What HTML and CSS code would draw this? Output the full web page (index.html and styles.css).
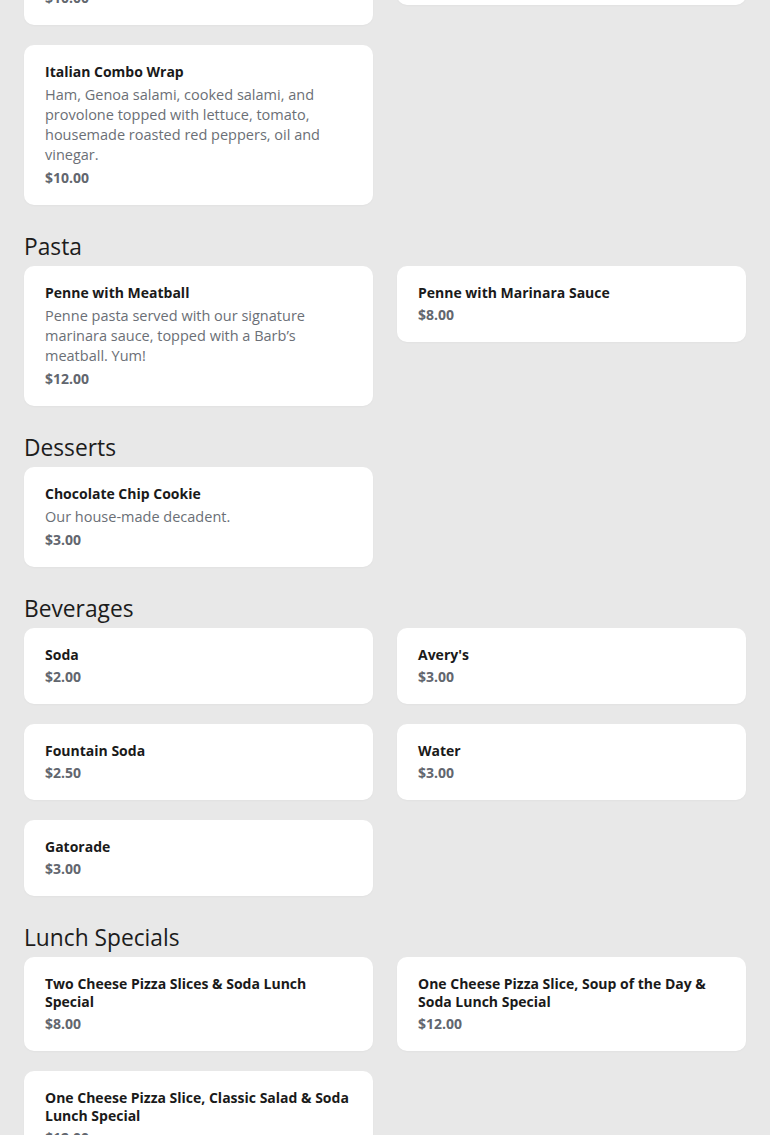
FILE: index.html
```html
<!DOCTYPE html>
<html lang="en">
<head>
    <meta charset="UTF-8">
    <meta name="viewport" content="width=device-width, initial-scale=1.0">
    <title>Menu</title>
    <link rel="stylesheet" href="styles.css">
</head>
<body>

    <main class="menu">

        <!-- Wraps (scrolled past) -->
        <section class="section section-first">
            <div class="items">
                <div class="item">
                    <p class="item-name">Turkey Club Wrap</p>
                    <p class="item-desc">Turkey, bacon, provolone, lettuce, tomato and mayo wrapped in a warm flour tortilla with a side of chips.</p>
                    <p class="item-price">$10.00</p>
                </div>
                <div class="item">
                    <p class="item-name">Chicken Caesar Wrap</p>
                    <p class="item-desc">Grilled chicken, romaine, parmesan and creamy Caesar dressing.</p>
                    <p class="item-price">$10.00</p>
                </div>
                <div class="item">
                    <p class="item-name">Italian Combo Wrap</p>
                    <p class="item-desc">Ham, Genoa salami, cooked salami, and provolone topped with lettuce, tomato, housemade roasted red peppers, oil and vinegar.</p>
                    <p class="item-price">$10.00</p>
                </div>
            </div>
        </section>

        <section class="section">
            <h2 class="section-title">Pasta</h2>
            <div class="items">
                <div class="item">
                    <p class="item-name">Penne with Meatball</p>
                    <p class="item-desc">Penne pasta served with our signature marinara sauce, topped with a Barb’s meatball. Yum!</p>
                    <p class="item-price">$12.00</p>
                </div>
                <div class="item">
                    <p class="item-name">Penne with Marinara Sauce</p>
                    <p class="item-price">$8.00</p>
                </div>
            </div>
        </section>

        <section class="section">
            <h2 class="section-title">Desserts</h2>
            <div class="items">
                <div class="item">
                    <p class="item-name">Chocolate Chip Cookie</p>
                    <p class="item-desc">Our house-made decadent.</p>
                    <p class="item-price">$3.00</p>
                </div>
            </div>
        </section>

        <section class="section">
            <h2 class="section-title">Beverages</h2>
            <div class="items">
                <div class="item">
                    <p class="item-name">Soda</p>
                    <p class="item-price">$2.00</p>
                </div>
                <div class="item">
                    <p class="item-name">Avery's</p>
                    <p class="item-price">$3.00</p>
                </div>
                <div class="item">
                    <p class="item-name">Fountain Soda</p>
                    <p class="item-price">$2.50</p>
                </div>
                <div class="item">
                    <p class="item-name">Water</p>
                    <p class="item-price">$3.00</p>
                </div>
                <div class="item">
                    <p class="item-name">Gatorade</p>
                    <p class="item-price">$3.00</p>
                </div>
            </div>
        </section>

        <section class="section">
            <h2 class="section-title">Lunch Specials</h2>
            <div class="items">
                <div class="item">
                    <p class="item-name">Two Cheese Pizza Slices &amp; Soda Lunch Special</p>
                    <p class="item-price">$8.00</p>
                </div>
                <div class="item">
                    <p class="item-name">One Cheese Pizza Slice, Soup of the Day &amp; Soda Lunch Special</p>
                    <p class="item-price">$12.00</p>
                </div>
                <div class="item">
                    <p class="item-name">One Cheese Pizza Slice, Classic Salad &amp; Soda Lunch Special</p>
                    <p class="item-price">$12.00</p>
                </div>
            </div>
        </section>

    </main>

</body>
</html>
```

FILE: styles.css
```css
body {
    font-family: 'Open Sans', 'Liberation Sans', sans-serif;
    background-color: #e8e8e8;
    margin: 0;
    color: #1a1a1a;
}

.menu {
    padding: 0 24px 40px;
}

.section {
    margin-top: 26px;
}

/* page is scrolled, first cards sit above the fold */
.section-first {
    margin-top: -115px;
}

.section-title {
    font-size: 22.75px;
    font-weight: 400;
    line-height: 32px;
    color: #1c1c1c;
    margin: 0 0 3px;
}

.items {
    display: grid;
    grid-template-columns: 1fr 1fr;
    column-gap: 24px;
    row-gap: 20px;
    align-items: start;
}

.item {
    background-color: #fff;
    border-radius: 10px;
    padding: 18px 21px 17px;
    box-shadow: 0 1px 2px rgba(0, 0, 0, 0.03);
}

.item p {
    margin: 0;
}

.item-name {
    font-size: 14px;
    font-weight: 700;
    line-height: 18px;
    color: #1a1a1a;
}

.item-desc {
    font-size: 14.5px;
    line-height: 20px;
    color: #6b6f76;
    margin-top: 4px !important;
}

.item-price {
    font-size: 14px;
    font-weight: 700;
    line-height: 20px;
    color: #62666e;
    margin-top: 3px !important;
}
```
